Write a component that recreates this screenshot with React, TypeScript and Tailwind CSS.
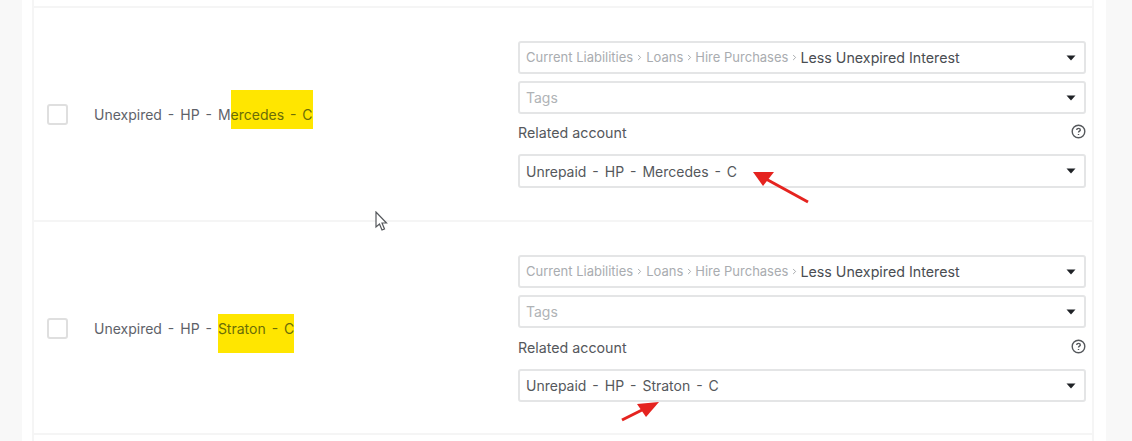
import { ChevronRight } from "lucide-react";

function Caret() {
  return (
    <svg width="10" height="6" viewBox="0 0 10 6" className="shrink-0">
      <path d="M0.5 0.5h9L5 5.500z" fill="#1f2226" />
    </svg>
  );
}

function Field({ className, children }: { className: string; children: React.ReactNode }) {
  return (
    <div className={`flex items-center justify-between border-2 border-[#e4e5e6] rounded-[3px] bg-white pl-[6px] pr-[8px] ${className}`}>
      <div className="flex items-center min-w-0 whitespace-nowrap">{children}</div>
      <Caret />
    </div>
  );
}

function Breadcrumb() {
  return (
    <>
      <span className="text-[13px] text-[#a9acb0]">Current Liabilities</span>
      <ChevronRight size={9} strokeWidth={2} className="mx-[2px] text-[#8e9195]" />
      <span className="text-[13px] text-[#a9acb0]">Loans</span>
      <ChevronRight size={9} strokeWidth={2} className="mx-[1.5px] text-[#8e9195]" />
      <span className="text-[13px] text-[#a9acb0]">Hire Purchases</span>
      <ChevronRight size={9} strokeWidth={2} className="mx-[1.5px] text-[#8e9195]" />
      <span className="text-[14.250px] text-[#4a4d52]">Less Unexpired Interest</span>
    </>
  );
}

function HelpIcon() {
  return (
    <svg width="15" height="15" viewBox="0 0 15 15" fill="none" stroke="#55585c" strokeWidth="1.4" className="-mt-[4px]">
      <circle cx="7.500" cy="7.500" r="6.300" />
      <path d="M5.700 6c0-1 .8-1.600 1.800-1.600S9.300 5 9.300 5.900c0 1.200-1.800 1.300-1.800 2.500" />
      <path d="M7.500 10v1" />
    </svg>
  );
}

function Row({
  plain,
  marked,
  related,
  className,
  markClass,
  textClass,
  labelGap,
  relatedHeight,
}: {
  plain: string;
  marked: string;
  related: string;
  className: string;
  markClass: string;
  textClass: string;
  labelGap: string;
  relatedHeight: string;
}) {
  return (
    <div className={`flex border-b-2 border-[#f5f5f5] ${className}`}>
      <div className={`w-[484px] shrink-0 flex items-center pl-[13px] ${textClass}`}>
        <div className="w-[21px] h-[21px] border-2 border-[#dfdfdf] rounded-[3px] bg-white mr-[26px]" />
        <div className="text-[14px] text-[#5e6269] [word-spacing:2px] whitespace-nowrap">
          {plain}
          <span className={`bg-[#ffe600] text-[#6a6d08] ${markClass}`}>{marked}</span>
        </div>
      </div>
      <div className="w-[568px] shrink-0 pt-[33px]">
        <Field className="h-[33px]">
          <Breadcrumb />
        </Field>
        <Field className="h-[33px] mt-[7px]">
          <span className="text-[14px] text-[#b0b3b6]">Tags</span>
        </Field>
        <div className={`flex items-center justify-between h-[20px] ${labelGap}`}>
          <span className="text-[14.250px] text-[#55585c]">Related account</span>
          <HelpIcon />
        </div>
        <Field className={`mt-[11px] ${relatedHeight}`}>
          <span className="text-[14px] text-[#55585c] [word-spacing:2px]">{related}</span>
        </Field>
      </div>
    </div>
  );
}

export default function App() {
  return (
    <div className="relative w-[1132px] h-[441px] overflow-hidden bg-[#f8f8f8] font-['Inter',sans-serif]">
      <div className="flex h-full">
        <div className="w-[22px] shrink-0" />
        <div className="w-[10px] bg-white shrink-0" />
        <div className="w-[1062px] shrink-0 border-x-2 border-[#f5f5f5] bg-white pt-[6px]">
          <div className="border-t-2 border-[#f5f5f5]">
            <Row
              plain="Unexpired - HP - M"
              marked="ercedes - C"
              related="Unrepaid - HP - Mercedes - C"
              className="h-[214px]"
              markClass="pt-[16px] pb-[6px]"
              textClass=""
              labelGap="mt-[9px]"
              relatedHeight="h-[34px]"
            />
            <Row
              plain="Unexpired - HP - "
              marked="Straton - C"
              related="Unrepaid - HP - Straton - C"
              className="h-[213px]"
              markClass="pt-[6px] pb-[16px]"
              textClass="pt-[2px]"
              labelGap="mt-[10px]"
              relatedHeight="h-[33px]"
            />
          </div>
        </div>
        <div className="w-[12px] bg-white shrink-0" />
      </div>

      {/* Cursor */}
      <svg className="absolute left-[375px] top-[211px]" width="14" height="22" viewBox="0 0 14 22">
        <path d="M1 1v15l3.500-3 2.500 6 2.500-1-2.500-6h4.500z" fill="#fff" stroke="#55585c" strokeWidth="1.200" />
      </svg>

      {/* Red arrows */}
      <svg className="absolute left-0 top-0 pointer-events-none" width="1132" height="441">
        <path d="M808 202L766 179" stroke="#e5231f" strokeWidth="3" />
        <path d="M753 172L774 172L763 186z" fill="#e5231f" />
        <path d="M622 420L644 409" stroke="#e5231f" strokeWidth="3" />
        <path d="M659 402L637 404L646 417z" fill="#e5231f" />
      </svg>
    </div>
  );
}
